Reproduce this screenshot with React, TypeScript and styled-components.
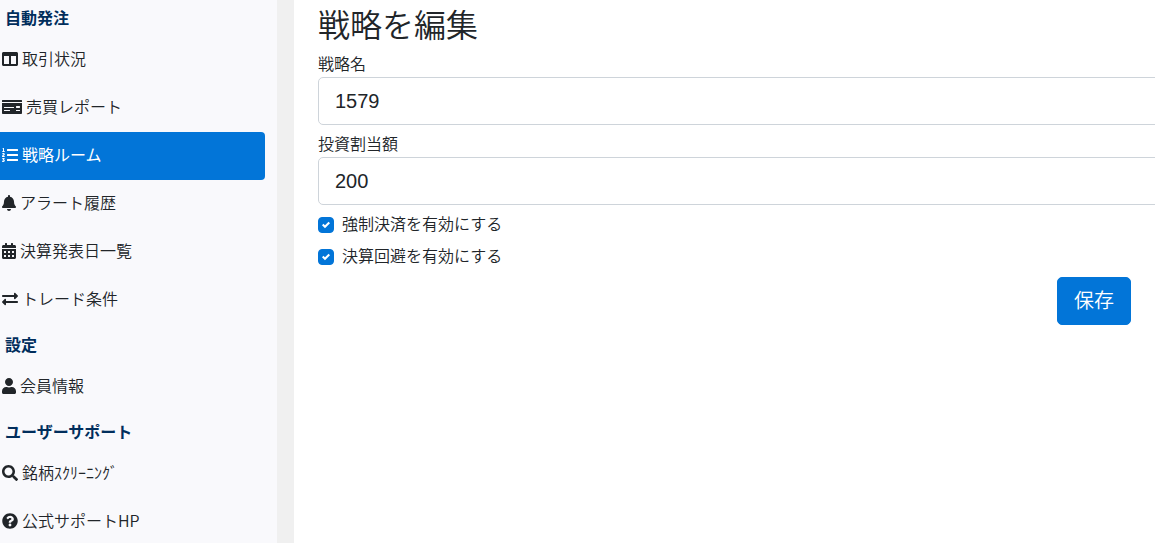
import React from "react";
import styled, { createGlobalStyle } from "styled-components";
import type { IconType } from "react-icons";
import {
  FaBell,
  FaCalendarAlt,
  FaColumns,
  FaExchangeAlt,
  FaListOl,
  FaMoneyCheck,
  FaQuestionCircle,
  FaSearch,
  FaUser,
} from "react-icons/fa";

const GlobalStyle = createGlobalStyle`
  *, *::before, *::after { box-sizing: border-box; }
  body {
    margin: 0;
    background: #fff;
    color: #212529;
    font-family: "Liberation Sans", "Noto Sans CJK JP", sans-serif;
    font-size: 16px;
    font-weight: 350;
    line-height: 24px;
  }
`;

const Page = styled.div`
  display: flex;
  height: 100vh;
  overflow: hidden;
`;

const Sidebar = styled.nav`
  flex: 0 0 294px;
  padding-right: 12px;
  background: #f9f9fc;
  border-right: 17px solid #f0f0f0;
  font-family: "Noto Sans CJK JP", sans-serif;
  overflow: hidden;
`;

const SectionTitle = styled.h2`
  margin: 0;
  padding: 8px 5px 7px;
  color: #012e5c;
  font-size: 16px;
  font-weight: 700;
  line-height: 24px;

  &:first-child {
    padding-top: 5px;
  }
`;

const NavList = styled.ul`
  margin: 0;
  padding: 0;
  list-style: none;
`;

const NavLink = styled.a<{ $active?: boolean }>`
  display: flex;
  align-items: center;
  gap: 4px;
  height: 48px;
  padding: 0 0 4px 2px;
  border-radius: 0 4px 4px 0;
  background: ${(p) => (p.$active ? "#0275d8" : "transparent")};
  color: ${(p) => (p.$active ? "#fff" : "#212529")};
  font-weight: ${(p) => (p.$active ? 400 : 350)};
  text-decoration: none;
  white-space: nowrap;
`;

const NavIcon = styled.span<{ $width: number }>`
  display: flex;
  padding-top: 2px;

  svg {
    width: ${(p) => p.$width}px;
    height: 16px;
  }
`;

const Main = styled.main`
  flex: 1;
  min-width: 0;
  padding: 7px 0 24px 24px;
  overflow: hidden;
`;

const Title = styled.h1`
  margin: 0 0 8px;
  font-size: 32px;
  font-weight: 350;
  line-height: 38px;
`;

const Field = styled.div`
  margin: 0 -24px 8px 0;
`;

const FieldLabel = styled.label`
  display: block;
`;

const TextInput = styled.input`
  display: block;
  width: 100%;
  height: 48px;
  padding: 8px 16px;
  border: 1px solid #ced4da;
  border-radius: 5px;
  background: #fff;
  color: #212529;
  font: inherit;
  font-size: 20px;
`;

const CheckRow = styled.label`
  display: flex;
  align-items: center;
  gap: 8px;
  width: fit-content;
  margin-bottom: 8px;
`;

const CheckControl = styled.span`
  display: grid;
  width: 16px;
  height: 16px;

  input,
  svg {
    grid-area: 1 / 1;
  }

  svg {
    place-self: center;
    width: 8px;
    height: 8px;
    pointer-events: none;
    visibility: hidden;
  }

  input:checked + svg {
    visibility: visible;
  }
`;

const Checkbox = styled.input`
  appearance: none;
  width: 16px;
  height: 16px;
  margin: 0;
  border: 1px solid #adb5bd;
  border-radius: 4px;
  background: #fff;

  &:checked {
    border-color: #0275d8;
    background: #0275d8;
  }
`;

const Actions = styled.div`
  display: flex;
  justify-content: flex-end;
  padding-right: 24px;
`;

const SaveButton = styled.button`
  height: 48px;
  padding: 0 16px;
  border: 1px solid #0275d8;
  border-radius: 5px;
  background: #0275d8;
  color: #fff;
  font: inherit;
  font-size: 20px;
`;

type Item = { label: string; icon: IconType; width: number; active?: boolean };

const sections: { title: string; items: Item[] }[] = [
  {
    title: "自動発注",
    items: [
      { label: "取引状況", icon: FaColumns, width: 16 },
      { label: "売買レポート", icon: FaMoneyCheck, width: 20 },
      { label: "戦略ルーム", icon: FaListOl, width: 16, active: true },
      { label: "アラート履歴", icon: FaBell, width: 14 },
      { label: "決算発表日一覧", icon: FaCalendarAlt, width: 14 },
      { label: "トレード条件", icon: FaExchangeAlt, width: 16 },
    ],
  },
  {
    title: "設定",
    items: [{ label: "会員情報", icon: FaUser, width: 14 }],
  },
  {
    title: "ユーザーサポート",
    items: [
      { label: "銘柄ｽｸﾘｰﾆﾝｸﾞ", icon: FaSearch, width: 16 },
      { label: "公式サポートHP", icon: FaQuestionCircle, width: 16 },
    ],
  },
];

function CheckField({ label }: { label: string }) {
  return (
    <CheckRow>
      <CheckControl>
        <Checkbox type="checkbox" defaultChecked />
        <svg viewBox="0 0 8 8" aria-hidden="true">
          <path
            fill="#fff"
            d="M6.564.75l-3.59 3.612-1.538-1.55L0 4.26l2.974 2.99L8 2.193z"
          />
        </svg>
      </CheckControl>
      {label}
    </CheckRow>
  );
}

export default function App() {
  return (
    <>
      <GlobalStyle />
      <Page lang="ja">
        <Sidebar>
          {sections.map((section) => (
            <React.Fragment key={section.title}>
              <SectionTitle>{section.title}</SectionTitle>
              <NavList>
                {section.items.map(({ label, icon: Icon, width, active }) => (
                  <li key={label}>
                    <NavLink href="#" $active={active} aria-current={active ? "page" : undefined}>
                      <NavIcon $width={width}>
                        <Icon aria-hidden="true" />
                      </NavIcon>
                      {label}
                    </NavLink>
                  </li>
                ))}
              </NavList>
            </React.Fragment>
          ))}
        </Sidebar>
        <Main>
          <Title>戦略を編集</Title>
          <form onSubmit={(e) => e.preventDefault()}>
            <Field>
              <FieldLabel htmlFor="strategy-name">戦略名</FieldLabel>
              <TextInput id="strategy-name" type="text" defaultValue="1579" />
            </Field>
            <Field>
              <FieldLabel htmlFor="allocation">投資割当額</FieldLabel>
              <TextInput id="allocation" type="text" inputMode="numeric" defaultValue="200" />
            </Field>
            <CheckField label="強制決済を有効にする" />
            <CheckField label="決算回避を有効にする" />
            <Actions>
              <SaveButton type="submit">保存</SaveButton>
            </Actions>
          </form>
        </Main>
      </Page>
    </>
  );
}
